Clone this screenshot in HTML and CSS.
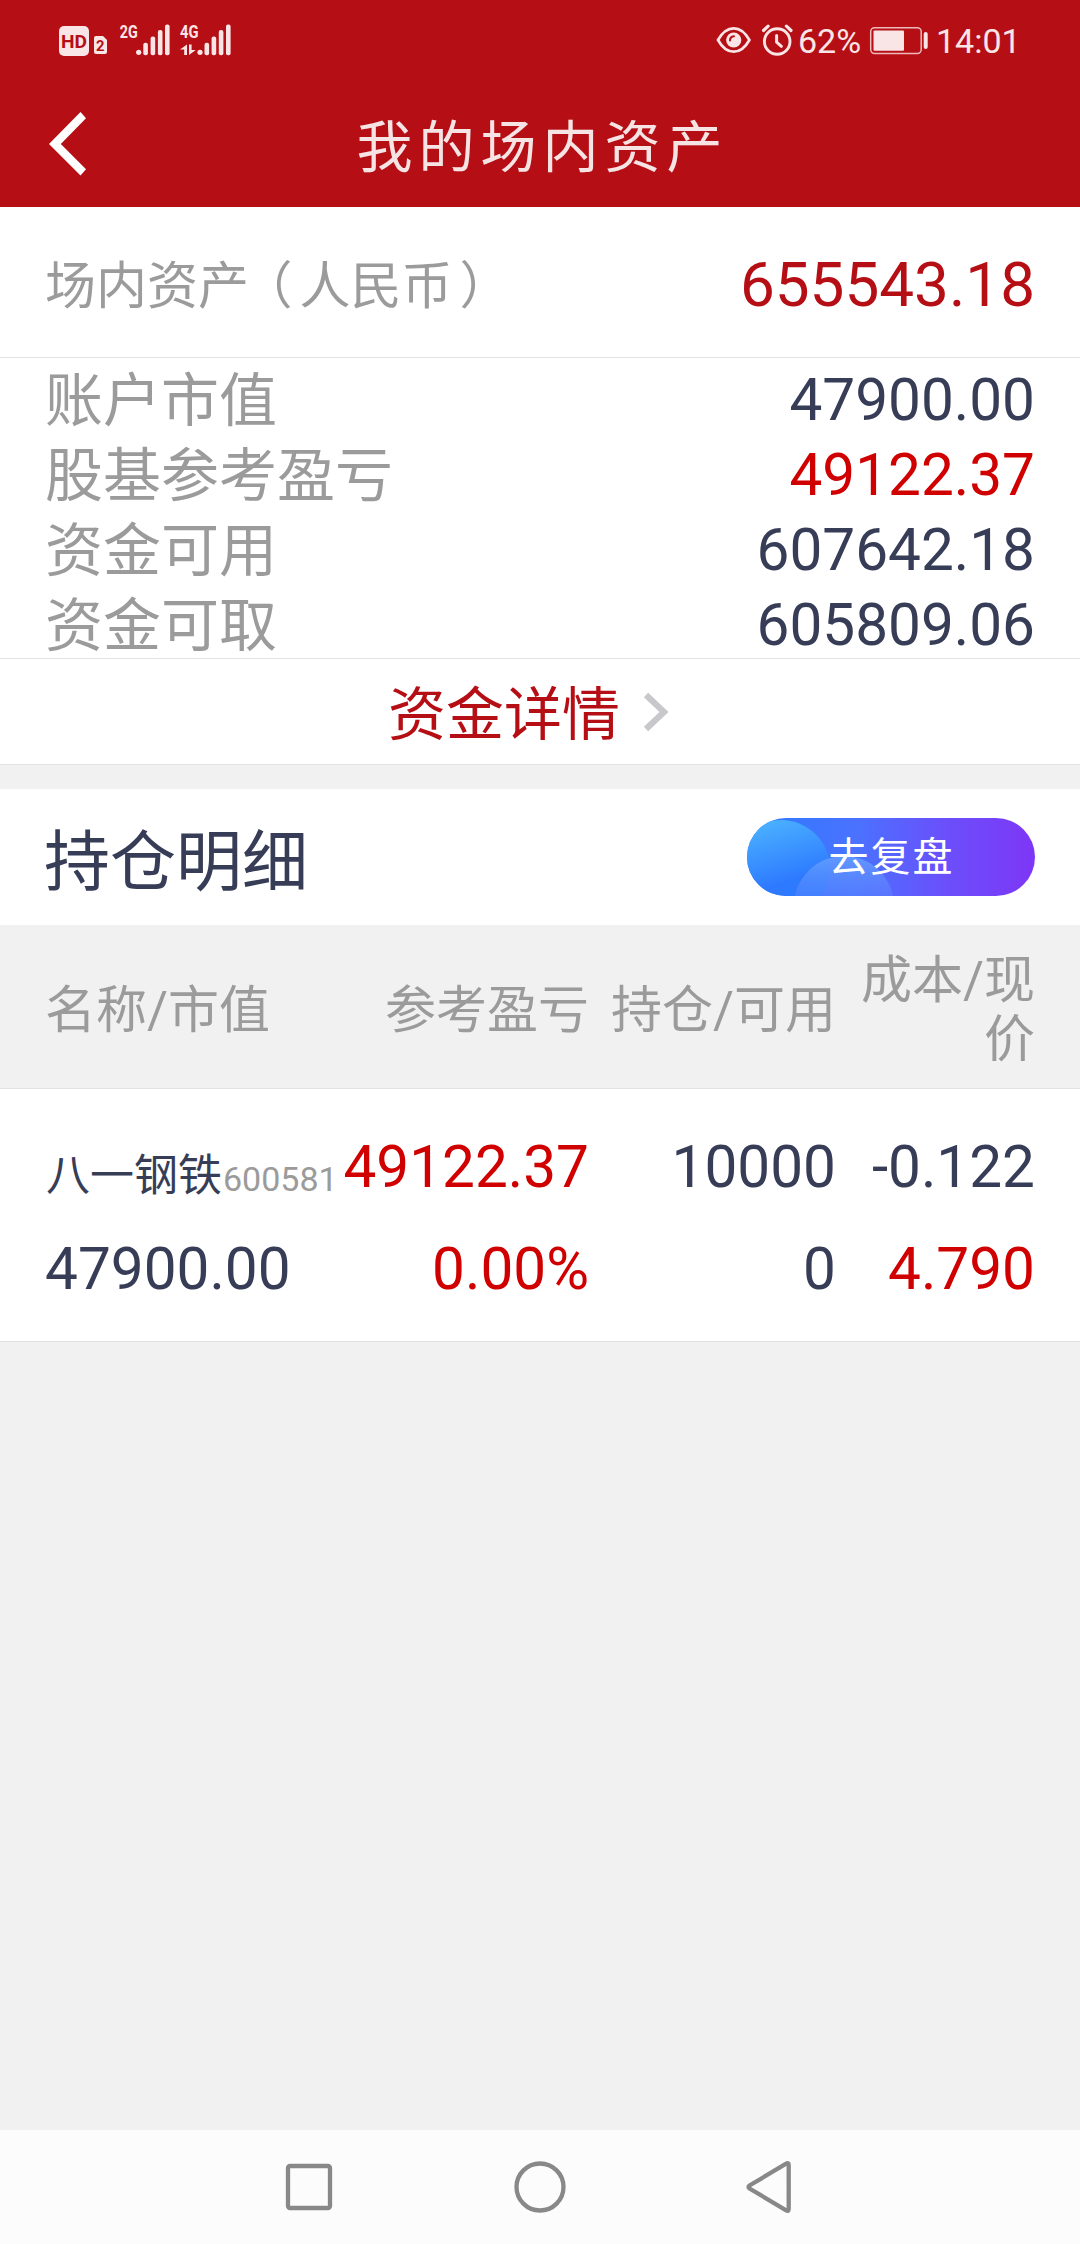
FILE: index.html
```
<!DOCTYPE html>
<html lang="zh-CN">
<head>
    <meta charset="UTF-8">
    <meta name="viewport" content="width=device-width, initial-scale=1.0">
    <title>我的场内资产</title>
    <link rel="stylesheet" href="styles.css">
</head>
<body>
    <div class="top">
        <div class="status-bar">
            <svg class="status-left" width="180" height="56" viewBox="56 12 180 56">
                <rect x="59" y="26" width="30" height="30" rx="5" fill="#f9e5e6"/>
                <text x="61" y="47.700" font-size="19" font-weight="bold" fill="#b50f15" textLength="26" lengthAdjust="spacingAndGlyphs">HD</text>
                <path d="M96 36h7l4 4v12q0 2-2 2h-9q-2 0-2-2V38q0-2 2-2z" fill="#f9e5e6"/>
                <text x="96" y="51" font-size="15.500" font-weight="bold" fill="#b50f15" textLength="8.500" lengthAdjust="spacingAndGlyphs">2</text>
                <g fill="#f9e5e6">
                    <text x="119.700" y="38.300" font-size="19" font-weight="bold" textLength="18" lengthAdjust="spacingAndGlyphs">2G</text>
                    <circle cx="138.700" cy="52.300" r="2.600"/>
                    <rect x="143.300" y="42.700" width="4.600" height="12.600" rx="2"/>
                    <rect x="150.600" y="36.600" width="4.600" height="18.700" rx="2"/>
                    <rect x="157.900" y="30" width="4.600" height="25.300" rx="2"/>
                    <rect x="165" y="24.600" width="4.600" height="30.700" rx="2"/>
                    <text x="180" y="38.300" font-size="19" font-weight="bold" textLength="18.500" lengthAdjust="spacingAndGlyphs">4G</text>
                    <path d="M187 44.500V55h-2.800v-5.500H180zM189 44.500h2.600v5.500h4.200L189 55z"/>
                    <circle cx="200" cy="52.300" r="2.600"/>
                    <rect x="204.500" y="42.700" width="4.600" height="12.600" rx="2"/>
                    <rect x="211.600" y="36.600" width="4.600" height="18.700" rx="2"/>
                    <rect x="218.800" y="30" width="4.600" height="25.300" rx="2"/>
                    <rect x="226" y="24.600" width="4.600" height="30.700" rx="2"/>
                </g>
            </svg>
            <div class="status-right">
                <svg width="36" height="36" viewBox="716 22 36 36">
                    <path d="M718 40q6.500-11.700 15.700-11.700T749.400 40q-6.500 11.700-15.700 11.700T718 40z" fill="none" stroke="#f9e5e6" stroke-width="2.700"/>
                    <circle cx="733.700" cy="40" r="7.600" fill="#f9e5e6"/>
                    <path d="M730 40.500q0-4 4-4.300" fill="none" stroke="#b50f15" stroke-width="2" stroke-linecap="round"/>
                </svg>
                <svg class="alarm" width="34" height="36" viewBox="760 22 34 36">
                    <g fill="none" stroke="#f9e5e6" stroke-linecap="round">
                        <circle cx="777.200" cy="41.500" r="12.800" stroke-width="2.900"/>
                        <path d="M763.500 30.500l4.600-4.300M791 30.500l-4.600-4.300" stroke-width="3.200"/>
                        <path d="M776.600 35.500v6.500l4.800 4.300" stroke-width="3"/>
                    </g>
                </svg>
                <span class="percent">62%</span>
                <svg class="battery" width="60" height="36" viewBox="869 22 60 36">
                    <rect x="870.700" y="27.700" width="50.500" height="25.900" rx="4" fill="none" stroke="#eeb9bb" stroke-width="1.500"/>
                    <rect x="873.500" y="30.500" width="30.500" height="20.300" rx="1" fill="#f9e5e6"/>
                    <rect x="923.700" y="32" width="4" height="17" rx="2" fill="#f9e5e6"/>
                </svg>
                <span class="time">14:01</span>
            </div>
        </div>
        <div class="nav-title">
            <svg class="back" width="38" height="64" viewBox="0 0 38 64">
                <path d="M31.500 0L37 6.200 11.800 32 37 57.200 31.500 63.500 0 32z" fill="#fff"/>
            </svg>
            <h1>我的场内资产</h1>
        </div>
    </div>

    <div class="total">
        <span class="total-label">场内资产<span class="paren-l">（</span>人民币<span class="paren-r">）</span></span>
        <span class="total-num">655543.18</span>
    </div>

    <div class="account">
        <div class="account-row"><span class="label">账户市值</span><span class="num">47900.00</span></div>
        <div class="account-row"><span class="label">股基参考盈亏</span><span class="num red">49122.37</span></div>
        <div class="account-row"><span class="label">资金可用</span><span class="num">607642.18</span></div>
        <div class="account-row"><span class="label">资金可取</span><span class="num">605809.06</span></div>
    </div>

    <div class="detail">
        <span>资金详情</span>
        <svg width="26" height="40" viewBox="0 0 26 40">
            <path d="M3 3l18 17L3 37" fill="none" stroke="#c7c7cc" stroke-width="6.200"/>
        </svg>
    </div>

    <div class="position-title">
        <h2>持仓明细</h2>
        <div class="review-btn">
            <svg class="review-bg" width="288" height="78" viewBox="0 0 288 78">
                <defs>
                    <linearGradient id="c1" x1="0.300" y1="0" x2="0.600" y2="1">
                        <stop offset="0" stop-color="#4bb3ff"/>
                        <stop offset="0.650" stop-color="#2e7aff"/>
                    </linearGradient>
                    <linearGradient id="c2" x1="0" y1="0" x2="0" y2="1">
                        <stop offset="0" stop-color="#6aa5ff" stop-opacity="0.750"/>
                        <stop offset="0.450" stop-color="#5f86ff" stop-opacity="0.350"/>
                    </linearGradient>
                </defs>
                <circle cx="34" cy="51" r="49" fill="url(#c1)"/>
                <circle cx="97" cy="88" r="50" fill="url(#c2)"/>
            </svg>
            <span>去复盘</span>
        </div>
    </div>

    <div class="grid table-head">
        <span>名称/市值</span>
        <span>参考盈亏</span>
        <span>持仓/可用</span>
        <span>成本/现价</span>
    </div>
    <div class="grid table-row">
        <span class="stock">八一钢铁<small>600581</small></span>
        <span class="red">49122.37</span>
        <span>10000</span>
        <span>-0.122</span>
        <span>47900.00</span>
        <span class="red">0.00%</span>
        <span>0</span>
        <span class="red">4.790</span>
    </div>

    <div class="bottom-nav">
        <svg width="56" height="56" viewBox="0 0 56 56"><rect x="7" y="7" width="42" height="42" rx="2"/></svg>
        <svg width="56" height="56" viewBox="0 0 56 56"><circle cx="28" cy="28" r="23.500"/></svg>
        <svg width="56" height="56" viewBox="0 0 56 56"><path d="M43.500 4.500Q45.700 3.500 45.700 6v44q0 2.500-2.200 1.500L6.500 29.500q-2-1.500 0-3z"/></svg>
    </div>
</body>
</html>
```
FILE: styles.css
```
* {
    box-sizing: border-box;
}

body {
    margin: 0;
    height: 2244px;
    display: flex;
    flex-direction: column;
    background-color: #f1f1f1;
    color: #373d56;
    font-family: Roboto, "Noto Sans CJK SC", sans-serif;
    font-size: 58.5px;
}

h1, h2 {
    margin: 0;
    font-weight: normal;
}

svg {
    display: block;
    flex: none;
}

.red {
    color: #d00000;
}

/* header */
.top {
    height: 207px;
    background-color: #b50f15;
}

.status-bar {
    height: 80px;
    padding: 0 60px 0 56px;
    display: flex;
    justify-content: space-between;
    align-items: center;
    color: #f9e5e6;
    font-size: 34px;
}

.status-right {
    display: flex;
    align-items: center;
    line-height: 36px;
}

.alarm {
    margin-left: 8px;
}

.percent {
    width: 71px;
    margin-left: 4px;
    padding-top: 2px;
}

.battery {
    margin-right: 7px;
}

.time {
    width: 84px;
    padding-top: 2px;
}

.nav-title {
    height: 127px;
    display: grid;
    grid-template-columns: 1fr auto 1fr;
    align-items: center;
    padding: 0 44px 0 49px;
}

.nav-title h1 {
    color: #f6e3e4;
    font-size: 56px;
    letter-spacing: 6px;
    line-height: 80px;
    padding-top: 9px;
}

/* total assets */
.total {
    height: 151px;
    padding: 5px 45px 0;
    display: flex;
    justify-content: space-between;
    align-items: center;
    background-color: #fff;
    border-bottom: 1px solid #e2e2e2;
}

.total-label {
    color: #9b9b9b;
    font-size: 51px;
    line-height: 80px;
    padding-top: 4px;
}

/* half-width brackets, spaced by hand */
.paren-l {
    font-feature-settings: "halt";
    margin: 0 7px 0 18px;
}

.paren-r {
    margin-left: 7px;
}

.total-num {
    color: #b50f15;
    font-size: 62px;
    line-height: 80px;
}

.account {
    height: 301px;
    padding: 5px 45px 0;
    background-color: #fff;
    border-bottom: 1px solid #e2e2e2;
}

.account-row {
    height: 75px;
    line-height: 75px;
    display: flex;
    justify-content: space-between;
}

.label {
    color: #9b9b9b;
    font-size: 58px;
    padding-top: 1px;
}

.detail {
    height: 106px;
    padding-left: 388px;
    display: flex;
    align-items: center;
    gap: 23px;
    background-color: #fff;
    border-bottom: 1px solid #e2e2e2;
    color: #b50f15;
    font-size: 58px;
    line-height: 80px;
}

.detail span {
    padding-top: 6px;
}

/* holdings */
.position-title {
    height: 136px;
    margin-top: 24px;
    padding: 0 45px 0 44px;
    display: flex;
    justify-content: space-between;
    align-items: center;
    background-color: #fff;
}

.position-title h2 {
    font-size: 66px;
    line-height: 80px;
    padding-top: 12px;
}

.review-btn {
    position: relative;
    width: 288px;
    height: 78px;
    border-radius: 39px;
    overflow: hidden;
    background: linear-gradient(90deg, #2b7bff, #4a72ff 38%, #6a50fb 68%, #7e36f6);
    color: #fff;
    font-size: 40px;
    letter-spacing: 2px;
    line-height: 80px;
    padding-left: 1px;
    text-align: center;
}

.review-bg {
    position: absolute;
    left: 0;
    top: 0;
}

.review-btn span {
    position: relative;
}

.grid {
    display: grid;
    grid-template-columns: 292px 252px 247px 199px;
    align-items: center;
    padding: 0 45px;
    text-align: right;
    border-bottom: 1px solid #e2e2e2;
}

.grid span:nth-child(4n + 1) {
    text-align: left;
}

.table-head {
    height: 164px;
    padding-top: 7px;
    color: #9b9b9b;
    font-size: 51px;
    line-height: 59px;
}

.table-row {
    height: 253px;
    padding-top: 27px;
    grid-auto-rows: 102px;
    align-content: start;
    background-color: #fff;
    line-height: 102px;
}

.stock {
    font-size: 44px;
    padding: 20px 0 0 1px;
    white-space: nowrap;
}

.stock small {
    margin-left: 1px;
    color: #9b9b9b;
    font-size: 34px;
}

/* system navigation */
.bottom-nav {
    height: 114px;
    margin-top: auto;
    padding: 0 281px;
    display: flex;
    justify-content: space-between;
    align-items: center;
    background-color: #fcfcfc;
    fill: none;
    stroke: #888;
    stroke-width: 4.300px;
}
```
